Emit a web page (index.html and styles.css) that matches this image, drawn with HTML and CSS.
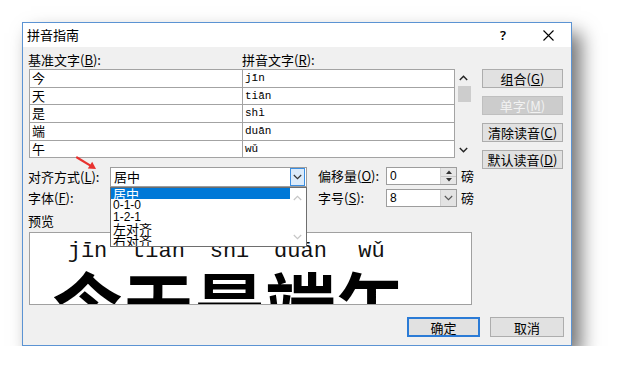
FILE: index.html
```html
<!DOCTYPE html>
<html>
<head>
<meta charset="utf-8">
<link rel="stylesheet" href="styles.css">
</head>
<body>
<div class="page">
  <div class="dialog">
    <div class="titlebar">
      <span class="title">拼音指南</span>
      <span class="help">?</span>
      <span class="close"><svg width="11" height="11" viewBox="0 0 11 11"><path d="M0.5 0.5 L10.5 10.5 M10.5 0.5 L0.5 10.5" stroke="#000" stroke-width="1.1" fill="none"/></svg></span>
    </div>
    <div class="content">
      <div class="top">
        <div class="left">
          <div class="hdr"><span class="h1">基准文字(<u>B</u>):</span><span>拼音文字(<u>R</u>):</span></div>
          <div class="grid">
            <div class="row"><div class="c1">今</div><div class="c2">jīn</div></div>
            <div class="row"><div class="c1">天</div><div class="c2">tiān</div></div>
            <div class="row"><div class="c1">是</div><div class="c2">shì</div></div>
            <div class="row"><div class="c1">端</div><div class="c2">duān</div></div>
            <div class="row"><div class="c1">午</div><div class="c2">wǔ</div></div>
          </div>
        </div>
        <div class="vscroll">
          <svg class="chev up" width="9" height="6" viewBox="0 0 9 6"><path d="M0.8 5 L4.5 1.3 L8.2 5" stroke="#222" stroke-width="1.4" fill="none"/></svg>
          <div class="thumb"></div>
          <svg class="chev down" width="9" height="6" viewBox="0 0 9 6"><path d="M0.8 1 L4.5 4.7 L8.2 1" stroke="#222" stroke-width="1.4" fill="none"/></svg>
        </div>
        <div class="btns">
          <button class="btn">组合(<u>G</u>)</button>
          <button class="btn disabled">单字(<u>M</u>)</button>
          <button class="btn">清除读音(<u>C</u>)</button>
          <button class="btn">默认读音(<u>D</u>)</button>
        </div>
      </div>

      <div class="frow r1">
        <span class="lbl">对齐方式(<u>L</u>):</span>
        <div class="combo wide">
          <span class="val">居中</span>
          <span class="dd hot"><svg width="9" height="6" viewBox="0 0 9 6"><path d="M0.8 1 L4.5 4.7 L8.2 1" stroke="#333" stroke-width="1.2" fill="none"/></svg></span>
        </div>
        <span class="lbl2">偏移量(<u>O</u>):</span>
        <div class="combo small">
          <span class="val num">0</span>
          <span class="spin">
            <span class="sp"><svg width="6" height="4" viewBox="0 0 6 4"><path d="M0 4 L3 0.5 L6 4 Z" fill="#333"/></svg></span>
            <span class="sp"><svg width="6" height="4" viewBox="0 0 6 4"><path d="M0 0 L3 3.5 L6 0 Z" fill="#333"/></svg></span>
          </span>
        </div>
        <span class="unit">磅</span>
      </div>

      <div class="frow r2">
        <span class="lbl">字体(<u>F</u>):</span>
        <div class="combo wide2"></div>
        <span class="lbl2">字号(<u>S</u>):</span>
        <div class="combo small">
          <span class="val num">8</span>
          <span class="dd gray"><svg width="9" height="6" viewBox="0 0 9 6"><path d="M0.8 1 L4.5 4.7 L8.2 1" stroke="#555" stroke-width="1.1" fill="none"/></svg></span>
        </div>
        <span class="unit">磅</span>
      </div>

      <div class="plabel">预览</div>
      <div class="preview">
        <div class="rb"><span class="py">jīn</span><span class="hz">今</span></div>
        <div class="rb"><span class="py">tiān</span><span class="hz">天</span></div>
        <div class="rb"><span class="py">shì</span><span class="hz">是</span></div>
        <div class="rb"><span class="py">duān</span><span class="hz">端</span></div>
        <div class="rb"><span class="py">wǔ</span><span class="hz">午</span></div>
      </div>

      <div class="footer">
        <button class="btn ok">确定</button>
        <button class="btn cancel">取消</button>
      </div>

      <div class="droplist">
        <div class="item sel">居中</div>
        <div class="item num">0-1-0</div>
        <div class="item num">1-2-1</div>
        <div class="item">左对齐</div>
        <div class="item">右对齐</div>
        <div class="lscroll">
          <svg width="9" height="6" viewBox="0 0 9 6"><path d="M0.8 5 L4.5 1.3 L8.2 5" stroke="#c6c6c6" stroke-width="1.2" fill="none"/></svg>
          <svg width="9" height="6" viewBox="0 0 9 6"><path d="M0.8 1 L4.5 4.7 L8.2 1" stroke="#c6c6c6" stroke-width="1.2" fill="none"/></svg>
        </div>
      </div>

      <svg class="arrow" width="26" height="18" viewBox="0 0 26 18">
        <path d="M2 2.5 L15 10.4" stroke="#e8322f" stroke-width="2.2" stroke-linecap="round" fill="none"/>
        <path d="M21 14 L12.8 13.6 L17.2 6.8 Z" fill="#e8322f"/>
      </svg>
    </div>
  </div>
</div>
</body>
</html>
```

FILE: styles.css
```css
* { box-sizing: border-box; }
html, body { margin: 0; padding: 0; background: #fff; }
body {
  font-family: "Noto Sans CJK SC", "Microsoft YaHei", sans-serif;
  font-size: 13px;
  color: #000;
}
u { text-decoration: underline; text-underline-offset: 1px; }

.page { padding: 22px 0 0 22px; }

.dialog {
  width: 550px;
  height: 324px;
  border: 1px solid #5b93d3;
  background: #f0f0f0;
  box-shadow: 9px 11px 18px rgba(0, 0, 0, 0.55);
  display: flex;
  flex-direction: column;
}

.titlebar {
  flex: none;
  height: 24px;
  background: #fff;
  display: flex;
  align-items: center;
  padding-left: 4px;
}
.title { font-size: 13px; line-height: 16px; }
.help {
  margin-left: auto;
  width: 10px;
  margin-right: 35px;
  text-align: center;
  font-family: "Noto Sans", sans-serif;
  font-weight: 600;
  font-size: 13px;
  line-height: 16px;
}
.close { width: 11px; height: 11px; margin-right: 17px; display: flex; }

.content {
  position: relative;
  flex: 1;
  padding: 0 7px 0 5px;
  display: flex;
  flex-direction: column;
}

/* top section */
.top { display: flex; align-items: flex-start; height: 111px; flex: none; }
.left { width: 427px; }
.hdr { height: 22px; padding-top: 5px; line-height: 16px; display: flex; }
.hdr .h1 { width: 214px; }
.grid {
  margin-left: 1px;
  width: 426px;
  border-top: 1px solid #a3a3a3;
  border-left: 1px solid #a3a3a3;
}
.row { display: flex; height: 18px; border-bottom: 1px solid #a3a3a3; }
.row:nth-child(2), .row:nth-child(5) { height: 17px; }
.c1, .c2 {
  background: #fff;
  border-right: 1px solid #a3a3a3;
  padding-left: 2px;
  line-height: 16px;
}
.c1 { width: 213px; font-size: 13px; }
.c2 { width: 212px; font-family: "Liberation Mono", monospace; font-size: 11px; }

.vscroll { position: relative; width: 17px; height: 89px; margin-top: 22px; }
.vscroll .chev { position: absolute; left: 4px; }
.vscroll .up { top: 6px; }
.vscroll .down { top: 78px; }
.thumb { position: absolute; left: 3px; top: 17px; width: 13px; height: 16px; background: #cdcdcd; }

.btns {
  margin-left: 10px;
  margin-top: 22px;
  width: 81px;
  display: flex;
  flex-direction: column;
  gap: 8px;
}
.btn {
  height: 19px;
  padding: 0;
  border: 1px solid #adadad;
  background: #e1e1e1;
  font-family: inherit;
  font-size: 13px;
  line-height: 16px;
  color: #000;
  text-align: center;
}
.btn.disabled { background: #cccccc; border-color: #bfbfbf; color: #f2f2f2; }

/* form rows */
.frow { display: flex; align-items: flex-start; flex: none; }
.r1 { margin-top: 9px; height: 20px; }
.r2 { margin-top: 2px; height: 18px; }
.lbl { width: 82px; line-height: 20px; }
.r2 .lbl { line-height: 18px; }
.lbl2 { margin-left: 11px; width: 68px; line-height: 18px; }
.unit { margin-left: 4px; line-height: 18px; }

.combo {
  background: #fff;
  border: 1px solid #9d9d9d;
  display: flex;
  align-items: stretch;
}
.combo.wide { width: 197px; height: 20px; }
.combo.wide2 { width: 197px; height: 18px; }
.combo.small { width: 71px; height: 18px; }
.val { flex: 1; padding-left: 3px; line-height: 18px; }
.combo.small .val { line-height: 16px; }
.num { font-family: "Liberation Sans", Arial, sans-serif; font-size: 12px; }

.dd { width: 16px; display: flex; align-items: center; justify-content: center; }
.dd.hot { width: 15px; margin: 0 1px 0 0; border: 1px solid #3c8ee0; background: #dcebfa; }
.dd.gray { background: #e3e3e3; border-left: 1px solid #d0d0d0; }

.spin { width: 16px; display: flex; flex-direction: column; background: #e6e6e6; border-left: 1px solid #d4d4d4; }
.sp { flex: 1; display: flex; align-items: center; justify-content: center; }
.sp:first-child { border-bottom: 1px solid #c8c8c8; }

/* preview */
.plabel { margin-top: 6px; line-height: 16px; flex: none; }
.preview {
  flex: none;
  margin-top: 3px;
  margin-left: 1px;
  width: 443px;
  height: 73px;
  border: 1px solid #a0a0a0;
  background: #fff;
  overflow: hidden;
  display: flex;
  padding: 8px 0 0 22px;
}
.rb { width: 71px; flex: none; display: flex; flex-direction: column; align-items: center; }
.py { font-family: "Liberation Mono", monospace; font-size: 22px; line-height: 22px; color: #111; }
.hz { font-family: "Noto Sans CJK SC", sans-serif; font-weight: 700; font-size: 71px; line-height: 70px; margin-top: 3px; }

/* footer */
.footer { margin-top: 12px; display: flex; justify-content: flex-end; gap: 10px; flex: none; }
.footer .btn { height: 20px; line-height: 17px; }
.ok { width: 73px; border: 2px solid #2b7bd6; line-height: 15px !important; }
.cancel { width: 74px; }

/* dropdown list overlay */
.droplist {
  position: absolute;
  left: 87px;
  top: 140px;
  width: 197px;
  height: 60px;
  border: 1px solid #6e6e6e;
  background: #fff;
  overflow: hidden;
}
.item { width: 179px; height: 12px; line-height: 12px; padding-left: 2px; font-size: 13px; white-space: nowrap; }
.item.num { font-size: 12px; }
.item.sel { background: #0078d7; color: #fff; height: 11px; }
.lscroll {
  position: absolute;
  right: 0;
  top: 0;
  width: 17px;
  height: 100%;
  display: flex;
  flex-direction: column;
  justify-content: space-between;
  align-items: center;
  padding: 7px 0 6px;
}

.arrow { position: absolute; left: 52px; top: 108px; }
```
